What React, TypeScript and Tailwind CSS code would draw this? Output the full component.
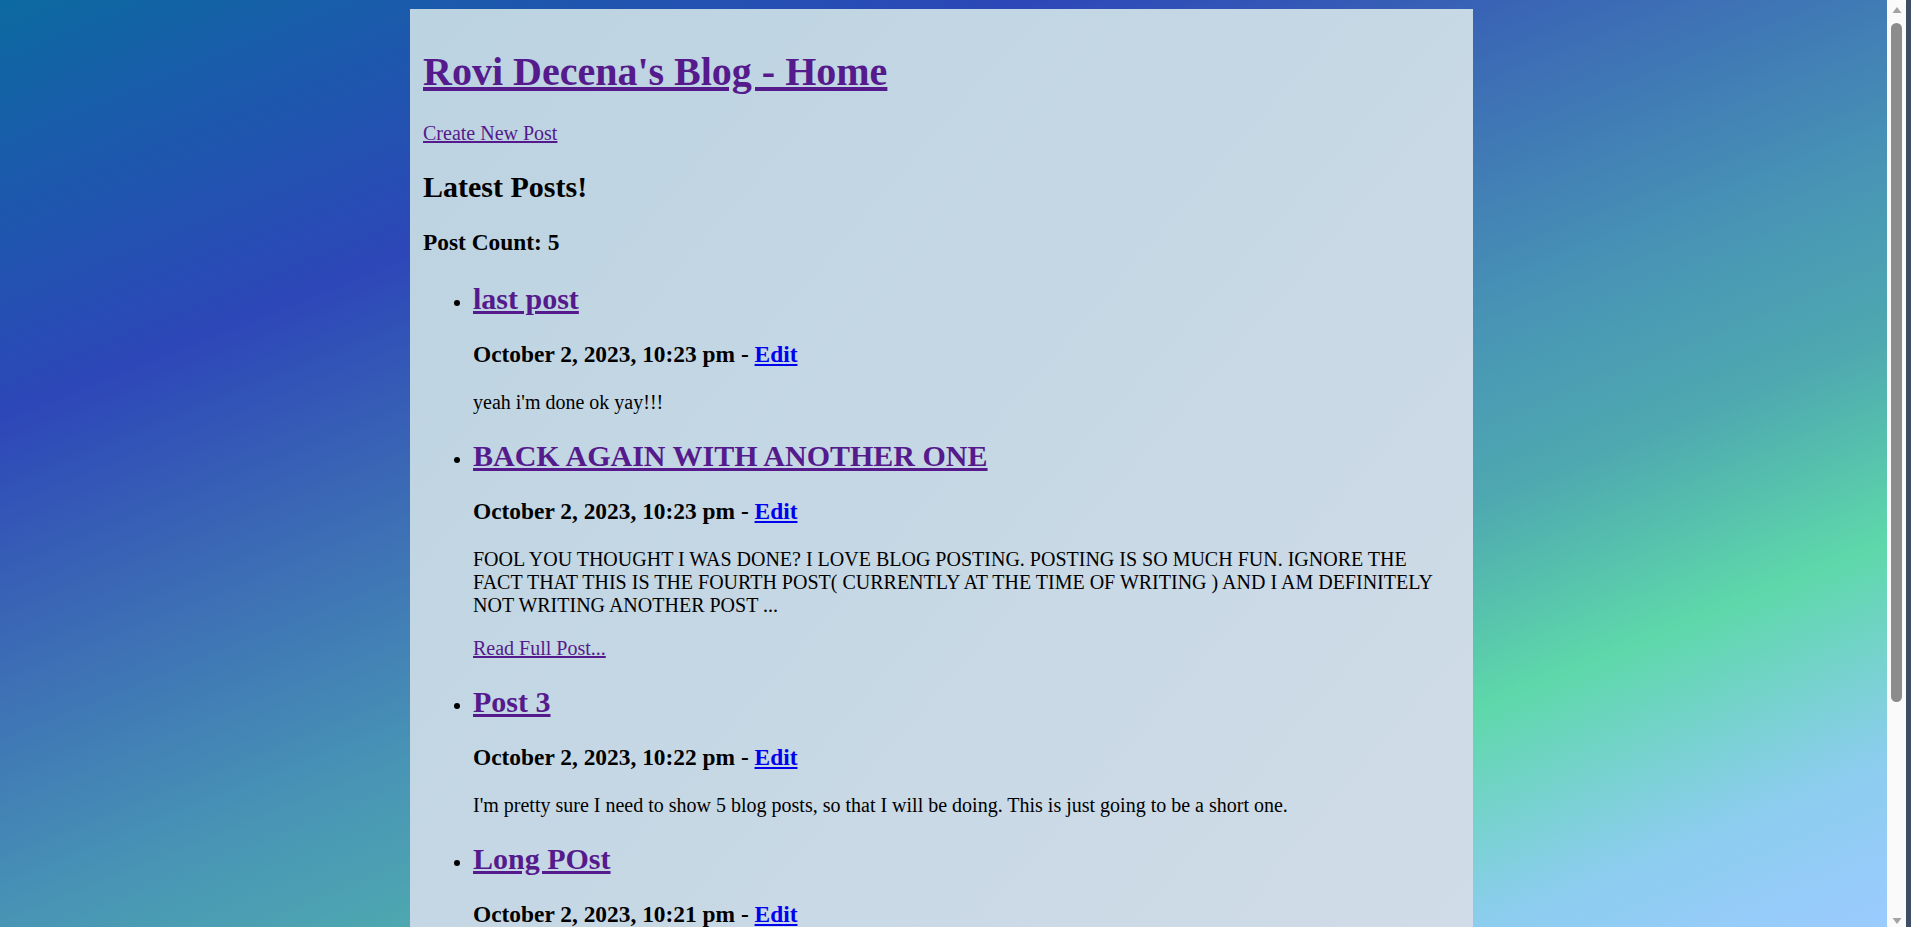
import React from 'react';

interface Post {
  id: number;
  title: string;
  date: string;
  body: string;
  truncated?: boolean;
}

const posts: Post[] = [
  {
    id: 5,
    title: 'last post',
    date: 'October 2, 2023, 10:23 pm',
    body: "yeah i'm done ok yay!!!",
  },
  {
    id: 4,
    title: 'BACK AGAIN WITH ANOTHER ONE',
    date: 'October 2, 2023, 10:23 pm',
    body:
      'FOOL YOU THOUGHT I WAS DONE? I LOVE BLOG POSTING. POSTING IS SO MUCH FUN. IGNORE THE FACT THAT THIS IS THE FOURTH POST( CURRENTLY AT THE TIME OF WRITING ) AND I AM DEFINITELY NOT WRITING ANOTHER POST ...',
    truncated: true,
  },
  {
    id: 3,
    title: 'Post 3',
    date: 'October 2, 2023, 10:22 pm',
    body: "I'm pretty sure I need to show 5 blog posts, so that I will be doing. This is just going to be a short one.",
  },
  {
    id: 2,
    title: 'Long POst',
    date: 'October 2, 2023, 10:21 pm',
    body: 'This one is going to be a long one, so bear with me while I write a whole lot of words about nothing in particular ...',
    truncated: true,
  },
  {
    id: 1,
    title: 'First Post',
    date: 'October 2, 2023, 10:20 pm',
    body: 'Hello world! This is my very first blog post.',
  },
];

const PostItem: React.FC<{ post: Post; first: boolean }> = ({ post, first }) => {
  return (
    <li>
      <h2 className={`${first ? 'mt-[26px]' : 'mt-[25px]'} text-[30px] leading-[34px] font-bold`}>
        <a href="#" className="text-[#551a8b] underline">
          {post.title}
        </a>
      </h2>
      <h3 className="mt-[25px] text-[23.4px] leading-[27px] font-bold">
        {post.date} -{' '}
        <a href="#" className="text-[#0000ee] underline">
          Edit
        </a>
      </h3>
      <p className="mt-[23px] text-[20px] leading-[23px]">{post.body}</p>
      {post.truncated && (
        <p className="mt-[20px] text-[20px] leading-[23px]">
          <a href="#" className="text-[#551a8b] underline">
            Read Full Post...
          </a>
        </p>
      )}
    </li>
  );
};

export default function App() {
  return (
    <div className="flex h-screen overflow-hidden font-['Liberation_Serif','Times_New_Roman',serif] text-black">
      <div className="flex-1 overflow-hidden pt-[9px] bg-[linear-gradient(158deg,#0c6aa0_0%,#1a5bab_10%,#2d47b8_24.7%,#3b69b5_38%,#4895b5_55%,#4ea8b0_65%,#5ed8aa_77.3%,#8ccdee_90%,#9bcbff_100%)]">
        <main className="ml-[410px] w-[1063px] min-h-[1400px] pl-[13px] pr-[20px] pt-[13px] pb-[40px] bg-[linear-gradient(131deg,#bcd3e1_0px,#d0dce8_1400px)]">
          <h1 className="mt-[27px] text-[40px] leading-[46px] font-bold">
            <a href="#" className="text-[#551a8b] underline">
              Rovi Decena's Blog - Home
            </a>
          </h1>
          <p className="mt-[27px] text-[20px] leading-[23px]">
            <a href="#" className="text-[#551a8b] underline">
              Create New Post
            </a>
          </p>
          <h2 className="mt-[25px] text-[30px] leading-[34px] font-bold">Latest Posts!</h2>
          <h3 className="mt-[25px] text-[23.4px] leading-[27px] font-bold">Post Count: {posts.length}</h3>
          <ul className="list-disc pl-[50px] text-[20px]">
            {posts.map((post, i) => (
              <PostItem key={post.id} post={post} first={i === 0} />
            ))}
          </ul>
        </main>
      </div>

      {/* scrollbar as seen in the capture */}
      <div className="w-[19px] flex flex-col items-center bg-[#fafafa] rounded-tr-[6px]">
        <svg width="10" height="8" viewBox="0 0 10 8" className="mt-[6px]">
          <polygon points="5,1 9.5,7 0.5,7" fill="#a3a3a3" />
        </svg>
        <div className="mt-[9px] h-[679px] w-[11px] rounded-full bg-[#8c8c8c]" />
        <div className="flex-1" />
        <svg width="10" height="8" viewBox="0 0 10 8" className="mb-[2px]">
          <polygon points="0.5,1 9.5,1 5,7" fill="#a3a3a3" />
        </svg>
      </div>
      <div className="w-[5px] bg-[#3e4e62]" />
    </div>
  );
}
